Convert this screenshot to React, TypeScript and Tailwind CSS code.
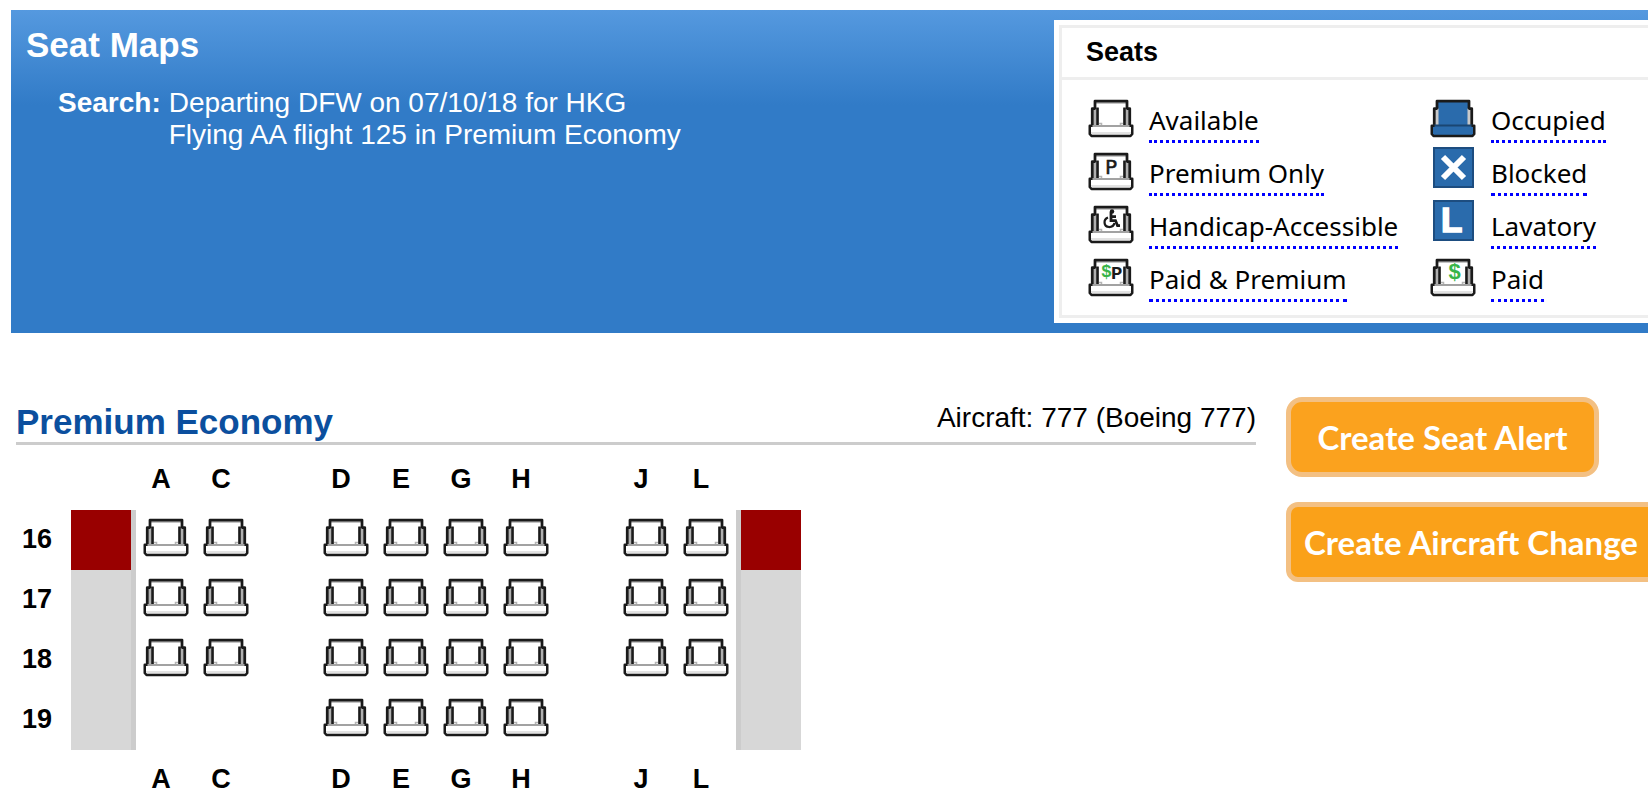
import React from "react";

type IconKind =
  | "available"
  | "premium"
  | "accessible"
  | "paidPremium"
  | "occupied"
  | "blocked"
  | "lavatory"
  | "paid";

const INK = "#1a1a1a";
const BLUE = "#2a6bac";
const GREEN = "#39b54a";

function SeatShape({ filled = false }: { filled?: boolean }) {
  return (
    <g>
      <rect x="7" y="7" width="34" height="28" fill={filled ? BLUE : "#ffffff"} />
      {!filled && <rect x="9" y="9" width="30" height="2" fill="#c4c4c4" />}
      <rect x="4" y="15" width="8" height="18" fill={filled ? "#c9c9c9" : "#b0b0b0"} />
      <rect x="36" y="15" width="8" height="18" fill={filled ? "#c9c9c9" : "#b0b0b0"} />
      {filled && <path d="M9.500 9H38.500V33H9.500Z" fill={BLUE} />}
      <path d="M8 16V8H40V16" fill="none" stroke={INK} strokeWidth="2.750" strokeLinejoin="round" />
      <path
        d="M5.250 33.500V15.500H8.500M42.750 33.500V15.500H39.500"
        fill="none"
        stroke={INK}
        strokeWidth="2.750"
        strokeLinejoin="round"
      />
      {!filled && (
        <g>
          <path d="M10.500 14.500V32.500M37.500 14.500V32.500" stroke={INK} strokeWidth="2.500" />
          <path d="M12 30.500H14.500V33H33.500V30.500H36" fill="none" stroke="#b4b4b4" strokeWidth="1.500" />
        </g>
      )}
      <rect x="3" y="33" width="42" height="9" fill={filled ? BLUE : "#ffffff"} />
      {filled ? (
        <rect x="4" y="31.500" width="40" height="2" fill="#1a4672" />
      ) : (
        <g>
          <rect x="5" y="32" width="38" height="2" fill="#a2a2a2" />
          <rect x="4" y="39" width="40" height="2.500" fill="#e2e2e2" />
        </g>
      )}
      <path
        d="M5.500 32.750H2.750V41L4.500 43H43.500L45.250 41V32.750H42.500"
        fill="none"
        stroke={INK}
        strokeWidth="2.500"
        strokeLinejoin="round"
      />
    </g>
  );
}

function SquareShape() {
  return <rect x="5" y="2" width="39" height="39" fill={BLUE} stroke="#1d4d80" strokeWidth="2" />;
}

function Icon({ kind, label }: { kind: IconKind; label: string }) {
  return (
    <svg viewBox="0 0 48 48" role="img" aria-label={label} className="block h-12 w-12 shrink-0">
      {kind === "blocked" || kind === "lavatory" ? (
        <SquareShape />
      ) : (
        <SeatShape filled={kind === "occupied"} />
      )}
      {kind === "blocked" && (
        <path d="M14 11L35 32M35 11L14 32" fill="none" stroke="#ffffff" strokeWidth="6" />
      )}
      {kind === "lavatory" && (
        <text x="12" y="33" fill="#ffffff" stroke="#ffffff" strokeWidth="1.500" fontSize="35" fontWeight="700" fontFamily="Liberation Sans, sans-serif">
          L
        </text>
      )}
      {kind === "premium" && (
        <text x="18" y="28" fill={INK} stroke={INK} strokeWidth="0.500" fontSize="20" fontFamily="DejaVu Sans, sans-serif">
          P
        </text>
      )}
      {kind === "paid" && (
        <text x="25.500" y="27" textAnchor="middle" fill={GREEN} fontSize="22" fontWeight="700" fontFamily="Liberation Sans, sans-serif">
          $
        </text>
      )}
      {kind === "paidPremium" && (
        <g fontWeight="700" fontFamily="Liberation Mono, monospace">
          <text x="14" y="25" fill={GREEN} fontSize="18">
            $
          </text>
          <text x="24" y="27" fill={INK} fontSize="19">
            P
          </text>
        </g>
      )}
      {kind === "accessible" && (
        <g fill="none" stroke={INK} strokeWidth="2.750">
          <circle cx="25" cy="12.500" r="2.250" fill={INK} stroke="none" />
          <path d="M24 13V21.500H28.500L30.500 26.500H33M24 17.500H29" />
          <path d="M21 18.500C16 20.500 16.500 27.500 22 28C25 28 27 26.500 27.500 24" strokeWidth="2.250" />
        </g>
      )}
    </svg>
  );
}

type LegendEntry = { kind: IconKind; label: string };

const legend: [LegendEntry, LegendEntry][] = [
  [
    { kind: "available", label: "Available" },
    { kind: "occupied", label: "Occupied" },
  ],
  [
    { kind: "premium", label: "Premium Only" },
    { kind: "blocked", label: "Blocked" },
  ],
  [
    { kind: "accessible", label: "Handicap-Accessible" },
    { kind: "lavatory", label: "Lavatory" },
  ],
  [
    { kind: "paidPremium", label: "Paid & Premium" },
    { kind: "paid", label: "Paid" },
  ],
];

function LegendItem({ kind, label }: LegendEntry) {
  return (
    <li className="flex h-[53px] items-start gap-3.5">
      <Icon kind={kind} label={`${label} seat`} />
      <a
        href="#legend"
        className="mt-[9px] whitespace-nowrap border-b-3 border-dotted border-[#0000ff] pb-0.5 font-['Noto_Sans',sans-serif] text-[26px] leading-9 text-black"
      >
        {label}
      </a>
    </li>
  );
}

function Legend() {
  return (
    <section id="legend" className="w-[594px] shrink-0 bg-white py-[5px] pl-[5px] text-black">
      <div className="border-y-3 border-l-3 border-[#eeeeee]">
        <h2 className="border-b-3 border-[#eeeeee] pt-2 pb-[9px] pl-6 text-[27px] leading-8 font-bold">Seats</h2>
        <div className="flex pt-[13px] pb-2.5 pl-[25px]">
          <ul className="w-[342px] shrink-0">
            {legend.map(([left]) => (
              <LegendItem key={left.kind} {...left} />
            ))}
          </ul>
          <ul>
            {legend.map(([, right]) => (
              <LegendItem key={right.kind} {...right} />
            ))}
          </ul>
        </div>
      </div>
    </section>
  );
}

const columns = ["A", "C", "", "D", "E", "G", "H", "", "J", "L"];

const rows = [
  { number: 16, exit: true, seats: "ACDEGHJL" },
  { number: 17, exit: false, seats: "ACDEGHJL" },
  { number: 18, exit: false, seats: "ACDEGHJL" },
  { number: 19, exit: false, seats: "DEGH" },
];

function ColumnLabels() {
  return (
    <tr className="h-[60px]">
      <td className="w-[55px]" />
      <td className="w-[65px]" />
      {columns.map((column, index) =>
        column ? (
          <th key={index} scope="col" className="w-[60px] pr-2.5 pb-0.5 text-center">
            {column}
          </th>
        ) : (
          <td key={index} className="w-[60px]" />
        ),
      )}
      <td className="w-[65px]" />
    </tr>
  );
}

function SeatMap() {
  return (
    <table className="mt-[5px] table-fixed border-separate border-spacing-0 text-[27px] leading-8">
      <thead>
        <ColumnLabels />
      </thead>
      <tbody>
        {rows.map((row) => (
          <tr key={row.number} className="h-[60px]">
            <th scope="row" className="pb-0.5 pl-1.5 text-left">
              {row.number}
            </th>
            <td className={row.exit ? "border-r-5 border-[#cccccc] bg-[#990000]" : "border-r-5 border-[#cccccc] bg-[#d7d7d7]"} />
            {columns.map((column, index) => (
              <td key={index} className="px-1.5 pt-0.5 align-top">
                {column && row.seats.includes(column) && (
                  <Icon kind="available" label={`Seat ${row.number}${column}, available`} />
                )}
              </td>
            ))}
            <td className={row.exit ? "border-l-5 border-[#cccccc] bg-[#990000]" : "border-l-5 border-[#cccccc] bg-[#d7d7d7]"} />
          </tr>
        ))}
      </tbody>
      <tfoot>
        <ColumnLabels />
      </tfoot>
    </table>
  );
}

export default function App() {
  return (
    <div className="overflow-x-hidden bg-white font-['Liberation_Sans',Arial,sans-serif] text-black">
      <header className="mt-2.5 ml-[11px] flex bg-[#317bc7] bg-[linear-gradient(to_bottom,#5599df_0px,#317bc7_95px)] py-2.5 text-white">
        <div className="flex-1 pl-[15px]">
          <h1 className="pt-[5px] text-[35px] leading-10 font-bold">Seat Maps</h1>
          <dl className="mt-[22px] ml-8 flex gap-2 text-[28px] leading-8">
            <dt className="font-bold">Search:</dt>
            <dd>
              Departing DFW on 07/10/18 for HKG
              <br />
              Flying AA flight 125 in Premium Economy
            </dd>
          </dl>
        </div>
        <Legend />
      </header>

      <main className="mt-16 flex gap-[30px] pl-4">
        <section className="flex-1">
          <div className="flex items-start justify-between border-b-3 border-[#cccccc]">
            <h2 className="pt-[5px] text-[35px] leading-10 font-bold text-[#0b4f9e]">Premium Economy</h2>
            <p className="pt-[5px] text-[28px] leading-8">Aircraft: 777 (Boeing 777)</p>
          </div>
          <SeatMap />
        </section>

        <aside className="flex w-[362px] shrink-0 flex-col items-start gap-[25px] overflow-hidden font-['Lato','Open_Sans',sans-serif] text-[33px] leading-10 font-bold text-white">
          <button type="button" className="h-20 w-[313px] rounded-2xl border-5 border-[#f3c083] bg-[#fba21e] font-bold">
            Create Seat Alert
          </button>
          <button type="button" className="h-20 w-[400px] rounded-xl border-5 border-[#f3c083] bg-[#faa119] pl-[13px] text-left font-bold whitespace-nowrap">
            Create Aircraft Change
          </button>
        </aside>
      </main>
    </div>
  );
}
